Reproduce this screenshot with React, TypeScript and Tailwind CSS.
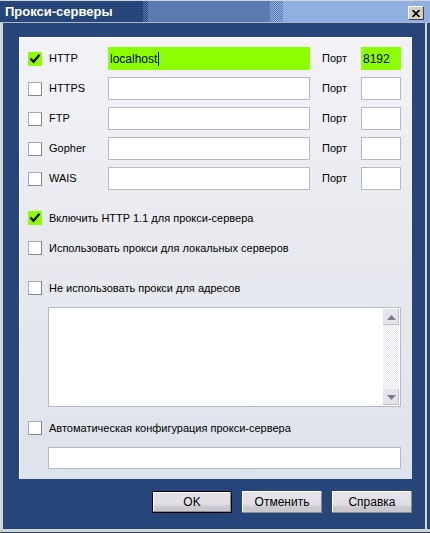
import React from "react";

const Check = ({ checked }: { checked?: boolean }) =>
  checked ? (
    <div className="w-[14px] h-[14px] shrink-0 bg-[#8cff00] flex items-center justify-center">
      <svg width="14" height="14" viewBox="0 0 14 14">
        <path d="M2.5 6.5 L5.5 9.8 L11.5 2.8" fill="none" stroke="#000" strokeWidth="2.2" />
      </svg>
    </div>
  ) : (
    <div className="w-[14px] h-[14px] shrink-0 bg-white border border-[#a9a9ae] border-b-[#85858a] border-r-[#85858a]" />
  );

const Field = ({ w, value, hl, caret }: { w: string; value?: string; hl?: boolean; caret?: boolean }) => (
  <div
    className={
      hl
        ? `${w} h-[23px] bg-[#8cff00] flex items-center pl-[2px] text-[12px]`
        : `${w} h-[23px] bg-white border border-[#b7bac4] flex items-center pl-[2px] text-[12px]`
    }
  >
    {value}
    {caret && <span className="ml-px w-px h-[14px] bg-black" />}
  </div>
);

const rows = [
  { name: "HTTP", checked: true, host: "localhost", port: "8192" },
  { name: "HTTPS" },
  { name: "FTP" },
  { name: "Gopher" },
  { name: "WAIS" },
];

const Btn = ({ label, def }: { label: string; def?: boolean }) => (
  <div
    className={
      def
        ? "w-[80px] h-[22px] border border-black bg-[linear-gradient(#e4e1e8_0%,#e0dde4_60%,#cbc9ce_75%,#c9c7cc_100%)] flex items-center justify-center shadow-[inset_-1px_-1px_0_#8c8c90,inset_1px_1px_0_#ffffff]"
        : "w-[80px] h-[22px] bg-[linear-gradient(#e6e3ea_0%,#e0dde4_60%,#cbc9ce_75%,#c9c7cc_100%)] flex items-center justify-center shadow-[inset_-1px_-1px_0_#8c8c90,inset_1px_1px_0_#ffffff]"
    }
  >
    <span className="text-[12px] text-black">{label}</span>
  </div>
);

export default function App() {
  return (
    <div className="w-[430px] h-[533px] bg-[#26467a] flex flex-col font-['Liberation_Sans',Arial,sans-serif] text-[11px] text-black overflow-hidden">
      <div className="h-px bg-[#cfd3da]" />
      {/* title bar */}
      <div className="h-[21px] flex relative">
        <div className="w-[143px] bg-[#26467a]" />
        <div className="w-[5px] bg-[repeating-conic-gradient(#26467a_0%_25%,#5a7ab0_0%_50%)] bg-[length:2px_2px]" />
        <div className="w-[122px] bg-[#5a7ab0]" />
        <div className="w-[13px] bg-[repeating-conic-gradient(#5a7ab0_0%_25%,#8fb0e0_0%_50%)] bg-[length:2px_2px]" />
        <div className="flex-1 bg-[#8fb0e0]" />
        <div className="absolute left-[5px] top-0 h-[21px] flex items-center text-white font-bold text-[13px]">
          Прокси-серверы
        </div>
        <div className="absolute left-[408px] top-[5px] w-[16px] h-[14px] bg-[#d4d0c8] border border-white border-r-[#404040] border-b-[#404040] flex items-center justify-center">
          <svg width="8" height="7" viewBox="0 0 8 7">
            <path d="M0.5 0 L7.5 7 M7.5 0 L0.5 7" stroke="#000" strokeWidth="1.6" />
          </svg>
        </div>
      </div>
      <div className="h-px bg-[#aeb8c8]" />
      <div className="flex-1 flex">
        <div className="w-[3px] bg-[#d4d4d4]" />
        <div className="flex-1 flex flex-col pl-[16px] pt-[14px]">
          {/* panel */}
          <div className="w-[393px] h-[442px] bg-[linear-gradient(#f3f3f7,#eaebf0_40%,#dde3ec)] border-l border-t border-white pl-[8px] pr-[11px] pt-[9px] flex flex-col">
            <div className="flex flex-col gap-[7px]">
              {rows.map((r) => (
                <div key={r.name} className="flex items-center h-[23px]">
                  <Check checked={r.checked} />
                  <span className="ml-[7px] w-[59px]">{r.name}</span>
                  <Field w="w-[202px]" value={r.host} hl={r.checked} caret={r.checked} />
                  <span className="ml-[12px] w-[39px]">Порт</span>
                  <Field w="w-[40px]" value={r.port} hl={r.checked} />
                </div>
              ))}
            </div>
            <div className="flex items-center mt-[21px] h-[14px]">
              <Check checked />
              <span className="ml-[7px]">Включить HTTP 1.1 для прокси-сервера</span>
            </div>
            <div className="flex items-center mt-[16px] h-[14px]">
              <Check />
              <span className="ml-[7px]">Использовать прокси для локальных серверов</span>
            </div>
            <div className="flex items-center mt-[26px] h-[14px]">
              <Check />
              <span className="ml-[7px]">Не использовать прокси для адресов</span>
            </div>
            <div className="ml-[20px] mt-[12px] w-[353px] h-[100px] bg-white border border-[#b7bac4] flex justify-end p-px">
              <div className="w-[16px] h-full flex flex-col bg-[repeating-conic-gradient(#e6e6ec_0%_25%,#ffffff_0%_50%)] bg-[length:2px_2px]">
                <div className="h-[16px] bg-[#e6e4ea] shadow-[inset_-1px_-1px_0_#c0bfc6] flex items-center justify-center">
                  <svg width="9" height="5" viewBox="0 0 9 5">
                    <path d="M0 5 L4.5 0 L9 5 Z" fill="#7d7d85" />
                  </svg>
                </div>
                <div className="flex-1" />
                <div className="h-[16px] bg-[#e6e4ea] shadow-[inset_-1px_-1px_0_#c0bfc6] flex items-center justify-center">
                  <svg width="9" height="5" viewBox="0 0 9 5">
                    <path d="M0 0 L4.5 5 L9 0 Z" fill="#7d7d85" />
                  </svg>
                </div>
              </div>
            </div>
            <div className="flex items-center mt-[14px] h-[14px]">
              <Check />
              <span className="ml-[7px]">Автоматическая конфигурация прокси-сервера</span>
            </div>
            <div className="ml-[20px] mt-[12px] w-[353px] h-[22px] bg-white border border-[#b7bac4]" />
          </div>
          <div className="flex justify-end gap-[10px] mt-[12px] w-[393px]">
            <Btn label="OK" def />
            <Btn label="Отменить" />
            <Btn label="Справка" />
          </div>
        </div>
        <div className="w-[2px] bg-[#d4d4d4]" />
        <div className="w-[3px] bg-[#26467a]" />
      </div>
      <div className="h-[3px] bg-[#d4d4d4]" />
      <div className="h-px bg-[#26467a]" />
    </div>
  );
}
